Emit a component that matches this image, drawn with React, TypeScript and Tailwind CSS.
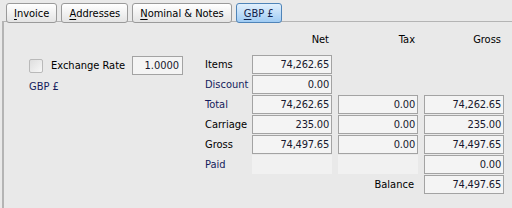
import React from "react";

// Currency tab of the invoice dialog: exchange rate on the left,
// Net / Tax / Gross totals grid on the right.

const font = { fontFamily: '"DejaVu Sans", "Liberation Sans", sans-serif' };

type Tab = { key: string; mn: string; rest: string; active?: boolean };

const tabs: Tab[] = [
  { key: "invoice", mn: "I", rest: "nvoice" },
  { key: "addresses", mn: "A", rest: "ddresses" },
  { key: "nominal", mn: "N", rest: "ominal & Notes" },
  { key: "gbp", mn: "G", rest: "BP £", active: true },
];

type Row = {
  label: string;
  blue?: boolean;
  net?: string | null;
  tax?: string | null;
  gross?: string | null;
};

// undefined = no cell, null = empty disabled cell
const rows: Row[] = [
  { label: "Items", net: "74,262.65" },
  { label: "Discount", blue: true, net: "0.00" },
  { label: "Total", blue: true, net: "74,262.65", tax: "0.00", gross: "74,262.65" },
  { label: "Carriage", net: "235.00", tax: "0.00", gross: "235.00" },
  { label: "Gross", net: "74,497.65", tax: "0.00", gross: "74,497.65" },
  { label: "Paid", blue: true, net: null, tax: null, gross: "0.00" },
];

function Cell({ value }: { value?: string | null }) {
  if (value === undefined) return <div className="w-[80px] h-[19px]" />;
  if (value === null) return <div className="w-[80px] h-[19px] bg-[#f1f1f1]" />;
  return (
    <div className="w-[80px] h-[19px] border border-[#a3a3a3] bg-[#f4f4f4] flex items-center justify-end pr-[2px] text-[#18182e] tracking-[-0.2px]">
      {value}
    </div>
  );
}

export default function App() {
  return (
    <div
      className="w-[512px] h-[208px] bg-[#e9e9e9] overflow-hidden text-[11px] leading-none text-black font-stretch-condensed"
      style={font}
    >
      <div className="relative z-10 flex pl-[6px] pt-[3px] gap-[4px]">
        {tabs.map((t) => (
          <div
            key={t.key}
            className={
              t.active
                ? "h-[20px] px-[7px] flex items-center rounded-[3px] border border-[#4f84b8] bg-gradient-to-b from-[#e2f0fd] to-[#9fcbf3] text-[#10204a]"
                : "h-[20px] px-[7px] flex items-center rounded-[3px] border border-[#9a9a9a] bg-gradient-to-b from-[#ffffff] to-[#e4e4e4]"
            }
          >
            <span className="underline underline-offset-[2px]">{t.mn}</span>
            {t.rest}
          </div>
        ))}
      </div>

      <div className="ml-[2px] -mt-[2px] h-[200px] border-l-2 border-t border-[#b4b4b4] flex">
        <div className="pl-[25px] pt-[34px] w-[201px] shrink-0">
          <div className="flex items-center">
            <div className="w-[14px] h-[14px] rounded-[2px] border border-[#b9b9b9] bg-gradient-to-br from-[#dedede] to-[#f7f7f7]" />
            <span className="ml-[8px]">Exchange Rate</span>
            <div className="ml-[7px] w-[51px] h-[19px] border border-[#a3a3a3] bg-[#f4f4f4] flex items-center justify-end pr-[3px] text-[#18182e]">
              1.0000
            </div>
          </div>
          <div className="mt-[6px] text-[#141c5c]">GBP £</div>
        </div>

        <div className="pt-[12px] flex flex-col gap-[1px]">
          <div className="flex h-[20px] items-start">
            <div className="w-[47px]" />
            <div className="w-[80px] text-right pr-[3px]">Net</div>
            <div className="ml-[6px] w-[80px] text-right pr-[3px]">Tax</div>
            <div className="ml-[6px] w-[80px] text-right pr-[3px]">Gross</div>
          </div>
          {rows.map((r) => (
            <div key={r.label} className="flex items-center">
              <div className={r.blue ? "w-[47px] text-[#141c5c]" : "w-[47px]"}>{r.label}</div>
              <Cell value={r.net} />
              <div className="ml-[6px]">
                <Cell value={r.tax} />
              </div>
              <div className="ml-[6px]">
                <Cell value={r.gross} />
              </div>
            </div>
          ))}
          <div className="flex items-center">
            <div className="w-[47px]" />
            <div className="w-[80px]" />
            <div className="ml-[6px] w-[80px] text-right pr-[4px]">Balance</div>
            <div className="ml-[6px]">
              <Cell value="74,497.65" />
            </div>
          </div>
        </div>
      </div>
    </div>
  );
}
